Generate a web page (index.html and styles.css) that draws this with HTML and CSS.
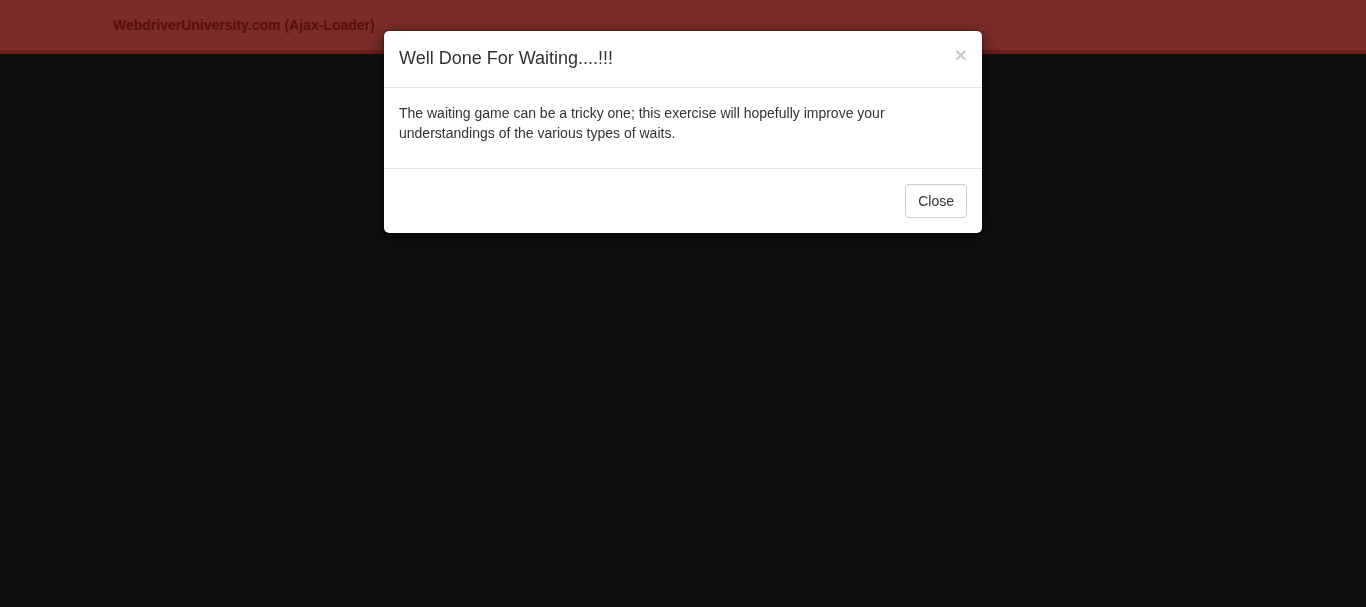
FILE: index.html
```html
<!DOCTYPE html>
<html>
<head>
<meta charset="utf-8">
<title>Ajax Loader</title>
<link rel="stylesheet" href="styles.css">
</head>
<body>
<nav class="navbar">
  <div class="container">
    <a class="brand" href="#">WebdriverUniversity.com (Ajax-Loader)</a>
  </div>
</nav>
<div class="modal-layer">
  <div class="modal">
    <div class="modal-header">
      <h4 class="modal-title">Well Done For Waiting....!!!</h4>
      <button class="x" type="button">×</button>
    </div>
    <div class="modal-body">
      <p>The waiting game can be a tricky one; this exercise will hopefully improve your understandings of the various types of waits.</p>
    </div>
    <div class="modal-footer">
      <button class="btn" type="button">Close</button>
    </div>
  </div>
</div>
</body>
</html>
```
FILE: styles.css
```css
html, body {
  margin: 0;
  padding: 0;
  height: 100%;
}
body {
  background: #0f0f0f;
  font-family: "Liberation Sans", Arial, sans-serif;
  font-size: 14px;
  line-height: 1.42857;
  color: #333;
}
.navbar {
  height: 50px;
  background: #7a2c29;
  border-bottom: 4px solid #6c1d19;
}
.container {
  width: 1170px;
  margin: 0 auto;
  padding: 15px 15px;
  box-sizing: border-box;
  height: 50px;
  line-height: 20px;
}
.brand {
  font-weight: bold;
  font-size: 14px;
  color: #5a0e0b;
  text-decoration: none;
}
.modal-layer {
  position: fixed;
  inset: 0;
  display: flex;
  justify-content: center;
  align-items: flex-start;
}
.modal {
  width: 600px;
  margin-top: 30px;
  box-sizing: border-box;
  background: #fff;
  background-clip: padding-box;
  border: 1px solid rgba(0,0,0,.2);
  border-radius: 6px;
  box-shadow: 0 5px 15px rgba(0,0,0,.5);
}
.modal-header {
  padding: 15px;
  border-bottom: 1px solid #e5e5e5;
  display: flex;
  justify-content: space-between;
  align-items: flex-start;
}
.modal-title {
  margin: 0;
  font-size: 18px;
  font-weight: 500;
  line-height: 1.42857;
  color: #333;
}
.x {
  background: none;
  border: 0;
  padding: 0;
  margin-top: -2px;
  font-family: "Liberation Sans", Arial, sans-serif;
  font-size: 21px;
  font-weight: bold;
  line-height: 1;
  color: #000;
  opacity: .2;
  cursor: pointer;
}
.modal-body {
  padding: 16px 15px 14px;
}
.modal-body p {
  margin: 0 0 10px;
}
.modal-footer {
  padding: 15px;
  border-top: 1px solid #e5e5e5;
  display: flex;
  justify-content: flex-end;
}
.btn {
  font-family: "Liberation Sans", Arial, sans-serif;
  font-size: 14px;
  line-height: 1.42857;
  padding: 7px 12px 5px;
  color: #333;
  background: #fff;
  border: 1px solid #ccc;
  border-radius: 4px;
  cursor: pointer;
}
```
